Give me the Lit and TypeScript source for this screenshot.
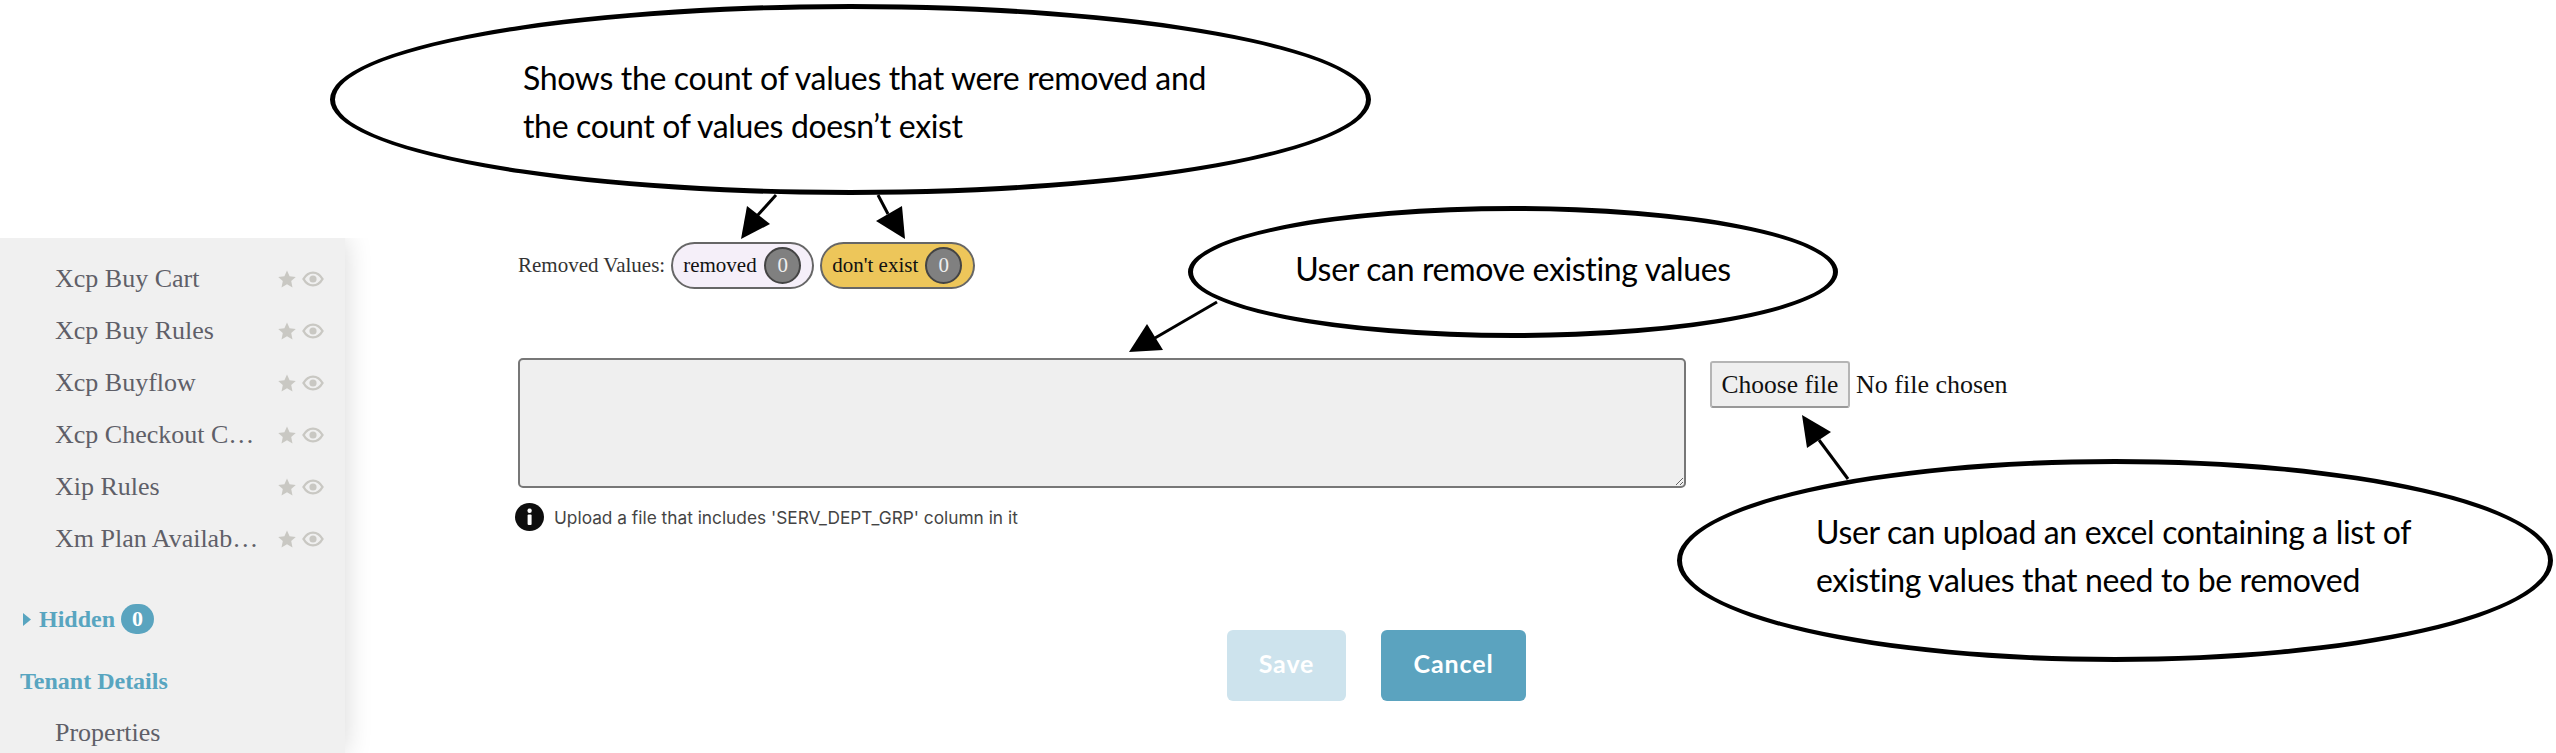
import { LitElement, html, css, svg } from "lit";
import { customElement } from "lit/decorators.js";

const items = ["Xcp Buy Cart", "Xcp Buy Rules", "Xcp Buyflow", "Xcp Checkout C…", "Xip Rules", "Xm Plan Availab…"];

const arrows: [number, number, number, number, string][] = [
  [776, 195, 757, 216, "741,239 747,206 770,224"],
  [878, 195, 888, 214, "905,239 876,221 902,206"],
  [1217, 302, 1155, 338, "1129,352 1147,324 1163,350"],
  [1848, 479, 1819, 440, "1802,415 1831,432 1807,448"],
];

@customElement("app-root")
export class AppRoot extends LitElement {
  static styles = css`
    :host { display: block; position: relative; width: 2556px; height: 753px; overflow: hidden; background: #fff; font-family: "Liberation Serif", serif; }
    .page { display: flex; align-items: flex-start; height: 753px; }
    .sidebar { flex: 0 0 345px; height: 515px; margin-top: 238px; padding-top: 15px; box-sizing: border-box; background: #f0f0f0; box-shadow: 0 0 26px rgba(0,0,0,.16); clip-path: inset(0 -50px 0 0); overflow: hidden; }
    .row { display: flex; align-items: center; height: 52px; padding-left: 55px; font-size: 26px; color: #5f5f68; }
    .label { width: 205px; margin-right: 18px; white-space: nowrap; }
    .star { width: 18px; height: 18px; margin-right: 6px; }
    .eye { width: 22px; height: 16px; }
    .hidden { display: flex; align-items: center; height: 30px; margin: 39px 0 0 23px; font-size: 24px; font-weight: 700; color: #58a5c0; }
    .caret { width: 8px; height: 13px; margin-right: 8px; }
    .badge { display: flex; align-items: center; justify-content: center; width: 33px; height: 30px; margin-left: 6px; border-radius: 15px; background: #5aa4bf; color: #fff; font-size: 22px; }
    .heading { margin: 32px 0 0 20px; height: 30px; line-height: 30px; font-size: 24px; font-weight: 700; color: #58a5c0; }
    .heading + .row { margin-top: 11px; }
    .main { flex: 1; padding: 242px 0 0 173px; }
    .values { display: flex; align-items: center; height: 47px; font-size: 21px; color: #333; }
    .values .cap { margin-right: 6px; }
    .pill { display: flex; align-items: center; box-sizing: border-box; height: 47px; padding: 0 11px 0 10px; margin-right: 6px; border: 2px solid #666; border-radius: 24px; font-size: 21px; color: #111; }
    .pill.a { width: 143px; background: #f5eff9; }
    .pill.b { width: 155px; background: #edc65a; }
    .count { display: flex; align-items: center; justify-content: center; box-sizing: border-box; width: 37px; height: 37px; margin-left: auto; border: 2px solid #444; border-radius: 50%; background: #808080; color: #eee; font-size: 21px; }
    .upload { display: flex; align-items: flex-start; margin-top: 69px; }
    textarea { display: block; box-sizing: border-box; width: 1168px; height: 130px; margin: 0 24px 0 0; border: 2px solid #777; border-radius: 5px; background: #efefef; }
    .choose { box-sizing: border-box; width: 140px; height: 47px; margin-top: 3px; padding: 0; border: 2px solid #b5b5b5; border-bottom-color: #999; border-radius: 3px; background: #efefef; font: 25.5px "Liberation Serif", serif; color: #111; }
    .none { margin: 13px 0 0 6px; font-size: 26px; line-height: 28px; color: #111; }
    .hint { display: flex; align-items: center; height: 28px; margin: 15px 0 0 -3px; font: 17.3px Inter, sans-serif; color: #444; }
    .hint svg { width: 29px; height: 28px; margin-right: 10px; }
    .actions { display: flex; gap: 35px; margin: 99px 0 0 709px; }
    .btn { display: flex; align-items: center; justify-content: center; height: 71px; border: 0; border-radius: 6px; padding: 0 0 5px; font: 700 25px Lato, sans-serif; letter-spacing: .9px; color: #fff; }
    .save { width: 119px; background: #cde3ed; }
    .cancel { width: 145px; background: #5ba3bf; }
    .callout { position: absolute; box-sizing: border-box; display: flex; align-items: center; border: 5px solid #000; border-radius: 50%; background: #fff; font: 32px/48px Lato, sans-serif; letter-spacing: -.35px; color: #000; white-space: nowrap; }
    .c1 { left: 330px; top: 4px; width: 1041px; height: 191px; padding: 5px 0 0 188px; }
    .c2 { left: 1188px; top: 206px; width: 650px; height: 132px; padding-bottom: 6px; justify-content: center; }
    .c3 { left: 1677px; top: 459px; width: 876px; height: 203px; padding: 0 0 10px 134px; }
    .arrows { position: absolute; left: 0; top: 0; width: 2556px; height: 753px; pointer-events: none; }
  `;

  render() {
    return html`
      <div class="page">
        <aside class="sidebar">
          ${items.map((t) => html`
            <div class="row">
              <span class="label">${t}</span>
              <svg class="star" viewBox="0 0 18 18"><polygon fill="#c9c8c3" points="9,0.5 11.6,6.2 17.8,6.9 13.2,11.1 14.5,17.4 9,14.2 3.5,17.4 4.8,11.1 0.2,6.9 6.4,6.2"/></svg>
              <svg class="eye" viewBox="0 0 22 16"><path fill="none" stroke="#c9c8c3" stroke-width="2.4" d="M1.5 8C4 3.6 7.4 1.6 11 1.6S18 3.6 20.5 8C18 12.4 14.6 14.4 11 14.4S4 12.4 1.5 8Z"/><circle cx="11" cy="8" r="3.6" fill="#c9c8c3"/></svg>
            </div>`)}
          <div class="hidden">
            <svg class="caret" viewBox="0 0 8 13"><polygon fill="#58a5c0" points="0,0 8,6.5 0,13"/></svg>
            <span>Hidden</span><span class="badge">0</span>
          </div>
          <div class="heading">Tenant Details</div>
          <div class="row"><span class="label">Properties</span></div>
        </aside>
        <main class="main">
          <div class="values">
            <span class="cap">Removed Values:</span>
            <span class="pill a">removed<span class="count">0</span></span>
            <span class="pill b">don't exist<span class="count">0</span></span>
          </div>
          <div class="upload">
            <textarea></textarea>
            <button class="choose">Choose file</button>
            <span class="none">No file chosen</span>
          </div>
          <div class="hint">
            <svg viewBox="0 0 29 28"><ellipse cx="14.5" cy="14" rx="14.5" ry="14" fill="#0d0d0d"/><rect x="12.6" y="11.5" width="4" height="10.5" rx="1" fill="#fff"/><circle cx="14.6" cy="7.8" r="2.2" fill="#fff"/></svg>
            <span>Upload a file that includes 'SERV_DEPT_GRP' column in it</span>
          </div>
          <div class="actions">
            <button class="btn save">Save</button>
            <button class="btn cancel">Cancel</button>
          </div>
        </main>
      </div>
      <div class="callout c1"><span>Shows the count of values that were removed and<br />the count of values doesn’t exist</span></div>
      <div class="callout c2"><span>User can remove existing values</span></div>
      <div class="callout c3"><span>User can upload an excel containing a list of<br />existing values that need to be removed</span></div>
      <svg class="arrows" viewBox="0 0 2556 753">
        ${arrows.map(([x1, y1, x2, y2, head]) => svg`
          <line x1=${x1} y1=${y1} x2=${x2} y2=${y2} stroke="#000" stroke-width="3"/>
          <polygon points=${head} fill="#000"/>`)}
      </svg>
    `;
  }
}
